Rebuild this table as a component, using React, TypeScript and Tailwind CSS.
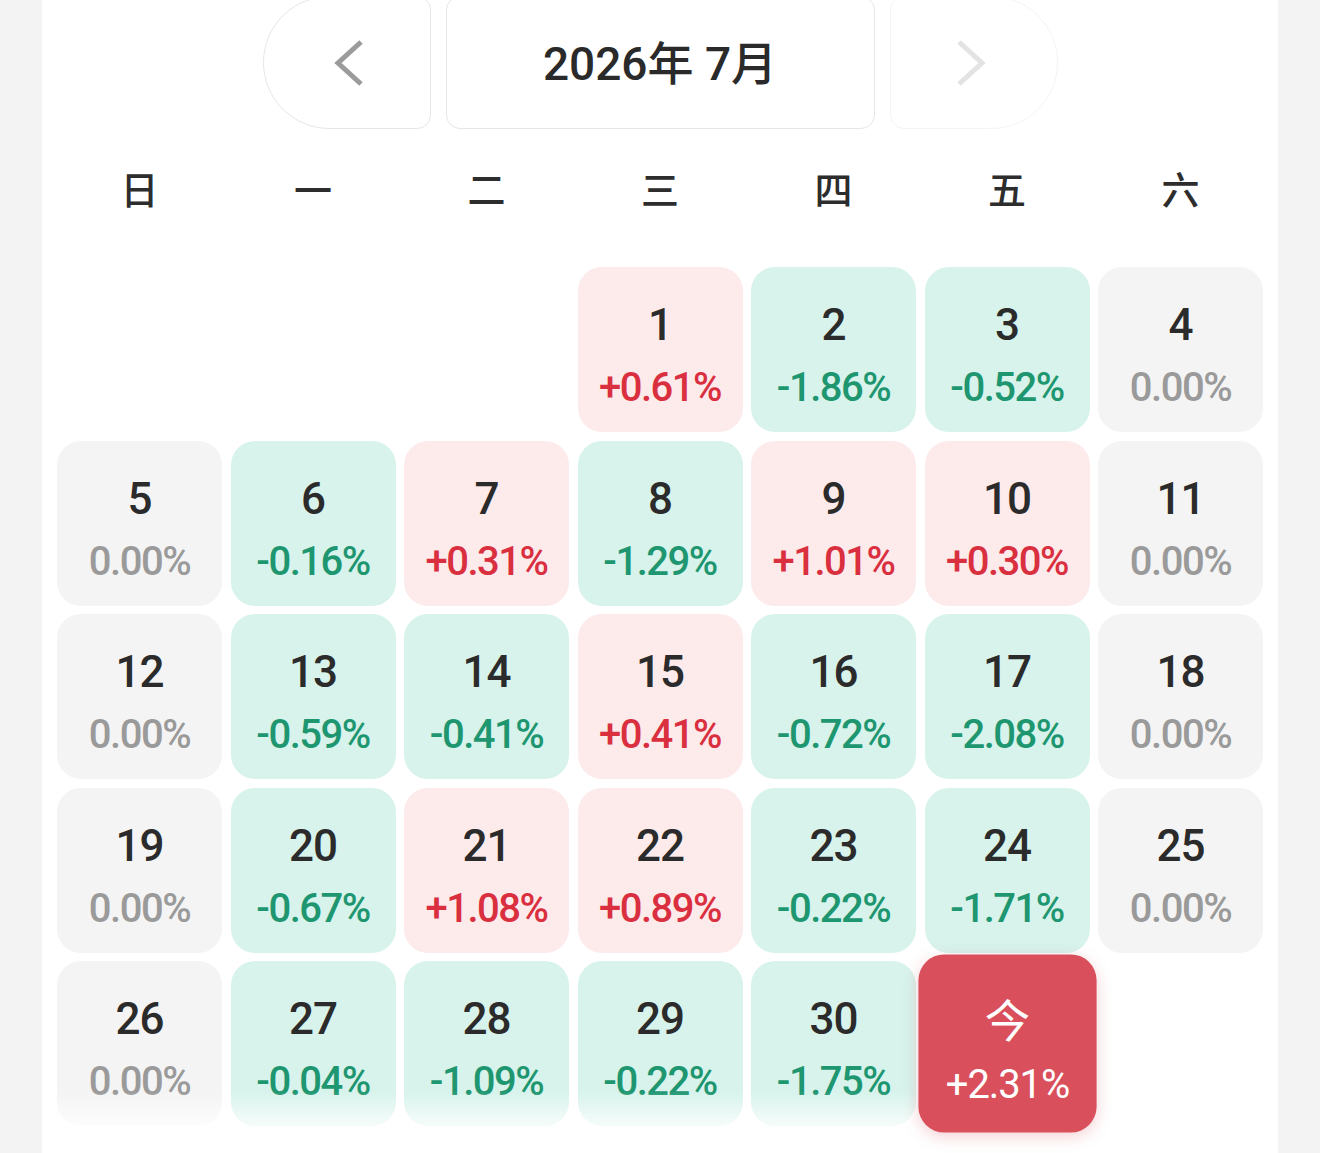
import React from 'react';

type Day = { d: number; v: number };

const days: Day[] = [
  { d: 1, v: 0.61 }, { d: 2, v: -1.86 }, { d: 3, v: -0.52 }, { d: 4, v: 0 },
  { d: 5, v: 0 }, { d: 6, v: -0.16 }, { d: 7, v: 0.31 }, { d: 8, v: -1.29 },
  { d: 9, v: 1.01 }, { d: 10, v: 0.3 }, { d: 11, v: 0 },
  { d: 12, v: 0 }, { d: 13, v: -0.59 }, { d: 14, v: -0.41 }, { d: 15, v: 0.41 },
  { d: 16, v: -0.72 }, { d: 17, v: -2.08 }, { d: 18, v: 0 },
  { d: 19, v: 0 }, { d: 20, v: -0.67 }, { d: 21, v: 1.08 }, { d: 22, v: 0.89 },
  { d: 23, v: -0.22 }, { d: 24, v: -1.71 }, { d: 25, v: 0 },
  { d: 26, v: 0 }, { d: 27, v: -0.04 }, { d: 28, v: -1.09 }, { d: 29, v: -0.22 },
  { d: 30, v: -1.75 },
];

const weekdays = ['日', '一', '二', '三', '四', '五', '六'];
const LEAD = 3; // july 1st 2026 is a wednesday

const numFont = { fontFamily: 'Roboto, "Noto Sans CJK SC", sans-serif' };
const cjkFont = { fontFamily: 'Roboto, "Noto Sans CJK SC", "Noto Sans", sans-serif' };

const fmt = (v: number) => (v > 0 ? '+' : v < 0 ? '-' : '') + Math.abs(v).toFixed(2) + '%';

const Chevron = ({ dir, color }: { dir: 'left' | 'right'; color: string }) => (
  <svg width="34" height="48" viewBox="0 0 34 48" fill="none">
    <polyline
      points={dir === 'left' ? '29,3 6,24 29,45' : '5,3 28,24 5,45'}
      stroke={color}
      strokeWidth="5"
      strokeLinecap="butt"
      strokeLinejoin="miter"
    />
  </svg>
);

const DayCell = ({ day }: { day: Day }) => {
  const up = day.v > 0;
  const down = day.v < 0;
  const bg = up ? 'bg-[#fdeaeb]' : down ? 'bg-[#d7f3ec]' : 'bg-[#f4f4f4]';
  const fg = up ? 'text-[#d92f3f]' : down ? 'text-[#1e9670]' : 'text-[#9a9a9a]';
  return (
    <div className={`h-[165px] rounded-[24px] ${bg} flex flex-col items-center pt-[34px] gap-[17px]`} style={numFont}>
      <div className="text-[44px] leading-[48px] font-medium tracking-[-1px] text-[#2b2b2b]">{day.d}</div>
      <div className={`text-[40px] leading-[44px] font-medium tracking-[-1.5px] ${fg}`}>{fmt(day.v)}</div>
    </div>
  );
};

const TodayCell = () => (
  <div className="relative z-10 h-[165px] rounded-[24px] bg-[#d9505c] flex flex-col items-center pt-[35px] gap-[16px] scale-[1.08] shadow-[0_4px_14px_rgba(217,80,92,0.25)]" style={numFont}>
    <div className="text-[42px] leading-[48px] text-white" style={{ fontFamily: '"Noto Sans CJK SC", sans-serif' }}>今</div>
    <div className="text-[37px] leading-[44px] tracking-[-1px] text-white">+2.31%</div>
  </div>
);

export default function App() {
  return (
    <div className="min-h-[1153px] bg-[#f3f3f3] flex justify-center overflow-hidden">
      <div className="relative w-[1236px] h-[1153px] bg-white px-[15px] overflow-hidden">
        {/* month switcher */}
        <div className="flex justify-center gap-[15px] -mt-[4px]">
          <button className="w-[168px] h-[133px] rounded-l-[67px] rounded-r-[14px] border border-[#e6e6e6] bg-white flex items-center justify-center pl-[4px]">
            <Chevron dir="left" color="#9b9b9b" />
          </button>
          <div className="w-[429px] h-[133px] rounded-[14px] border border-[#e6e6e6] bg-white flex items-center justify-center pt-[4px]">
            <span className="text-[46px] font-medium text-[#2a2a2a]" style={cjkFont}>2026年 7月</span>
          </div>
          <button className="w-[168px] h-[133px] rounded-r-[67px] rounded-l-[14px] border border-[#f4f4f4] bg-white flex items-center justify-center pr-[6px]">
            <Chevron dir="right" color="#e3e3e3" />
          </button>
        </div>

        {/* weekday labels */}
        <div className="grid grid-cols-7 gap-x-[8.5px] h-[122px] items-center pb-[6px]">
          {weekdays.map((w) => (
            <div key={w} className="text-center text-[38px] font-medium text-[#2d2d2d]" style={{ fontFamily: '"Noto Sans CJK SC", sans-serif' }}>
              {w}
            </div>
          ))}
        </div>

        {/* days */}
        <div className="grid grid-cols-7 gap-[8.5px] mt-[16px]">
          {Array.from({ length: LEAD }).map((_, i) => (
            <div key={'e' + i} className="h-[165px]" />
          ))}
          {days.map((day) => (
            <DayCell key={day.d} day={day} />
          ))}
          <TodayCell />
        </div>

        {/* bottom fade */}
        <div className="pointer-events-none absolute left-0 right-0 bottom-0 h-[62px] bg-gradient-to-b from-white/0 via-white/70 to-white" />
      </div>
    </div>
  );
}
